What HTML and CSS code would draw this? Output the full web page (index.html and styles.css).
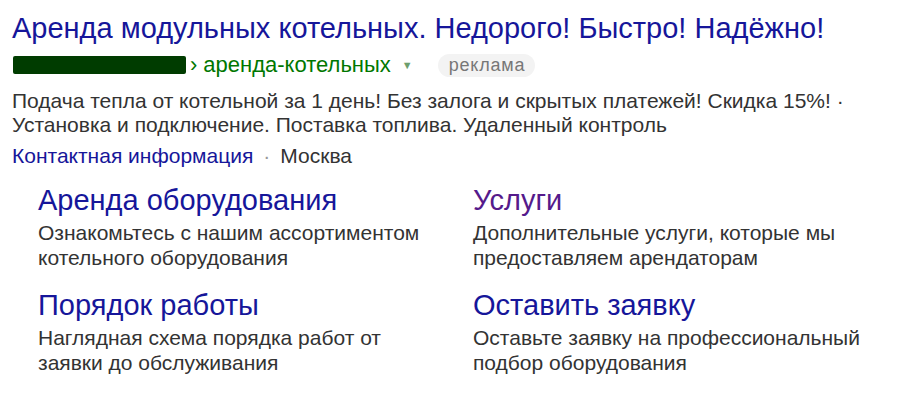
FILE: index.html
```html
<!DOCTYPE html>
<html lang="ru">
<head>
<meta charset="utf-8">
<link rel="stylesheet" href="styles.css">
</head>
<body>
<div class="ad">
  <h2 class="title"><a href="#">Аренда модульных котельных. Недорого! Быстро! Надёжно!</a></h2>
  <div class="path">
    <span class="domain"></span>
    <span class="crumb">›</span>
    <span class="crumb-text">аренда-котельных</span>
    <span class="tri">▼</span>
    <span class="label">реклама</span>
  </div>
  <div class="text">Подача тепла от котельной за 1 день! Без залога и скрытых платежей! Скидка 15%! ·<br>Установка и подключение. Поставка топлива. Удаленный контроль</div>
  <div class="meta"><a href="#" class="contact">Контактная информация</a><span class="dot">·</span><span class="city">Москва</span></div>
  <div class="sitelinks">
    <div class="sl">
      <a href="#" class="sl-title">Аренда оборудования</a>
      <div class="sl-desc">Ознакомьтесь с нашим ассортиментом<br>котельного оборудования</div>
    </div>
    <div class="sl">
      <a href="#" class="sl-title visited">Услуги</a>
      <div class="sl-desc">Дополнительные услуги, которые мы<br>предоставляем арендаторам</div>
    </div>
    <div class="sl">
      <a href="#" class="sl-title">Порядок работы</a>
      <div class="sl-desc">Наглядная схема порядка работ от<br>заявки до обслуживания</div>
    </div>
    <div class="sl">
      <a href="#" class="sl-title">Оставить заявку</a>
      <div class="sl-desc">Оставьте заявку на профессиональный<br>подбор оборудования</div>
    </div>
  </div>
</div>
</body>
</html>
```

FILE: styles.css
```css
html, body {
  margin: 0;
  padding: 0;
  background: #fff;
}
body {
  font-family: "Liberation Sans", Arial, sans-serif;
  color: #333;
}
a { text-decoration: none; }
.ad {
  padding: 11px 0 0 12px;
}
.title {
  margin: 0;
  font-weight: normal;
  font-size: 29px;
  line-height: 34px;
}
.title a { color: #16169a; }
.path {
  display: flex;
  align-items: center;
  height: 26px;
  margin-top: 7px;
  font-size: 22px;
  color: #007700;
}
.domain {
  width: 173px;
  height: 18px;
  background: #003c00;
  border-radius: 2px;
  margin-left: 1px;
}
.crumb { margin-left: 4px; margin-right: 6px; }
.tri {
  font-size: 11px;
  color: #6d9f6d;
  margin-left: 11px;
}
.label {
  margin-left: 25px;
  background: #f3f3f3;
  color: #777;
  font-size: 18px;
  line-height: 21px;
  padding: 1px 10px 1px 11px;
  border-radius: 12px;
  letter-spacing: 0.8px;
}
.text {
  margin-top: 11px;
  font-size: 21px;
  line-height: 24px;
  color: #333;
}
.meta {
  margin-top: 7px;
  font-size: 21px;
  line-height: 24px;
}
.contact { color: #16169a; }
.dot { margin: 0 10px; color: #999; }
.sitelinks {
  display: grid;
  grid-template-columns: 435px 420px;
  row-gap: 18px;
  margin-top: 15px;
  padding-left: 26px;
}
.sl-title {
  display: block;
  font-size: 29px;
  line-height: 34px;
  color: #16169a;
}
.sl-title.visited { color: #551a8b; }
.sl-desc {
  margin-top: 3px;
  font-size: 21px;
  line-height: 25px;
  color: #333;
}
```
